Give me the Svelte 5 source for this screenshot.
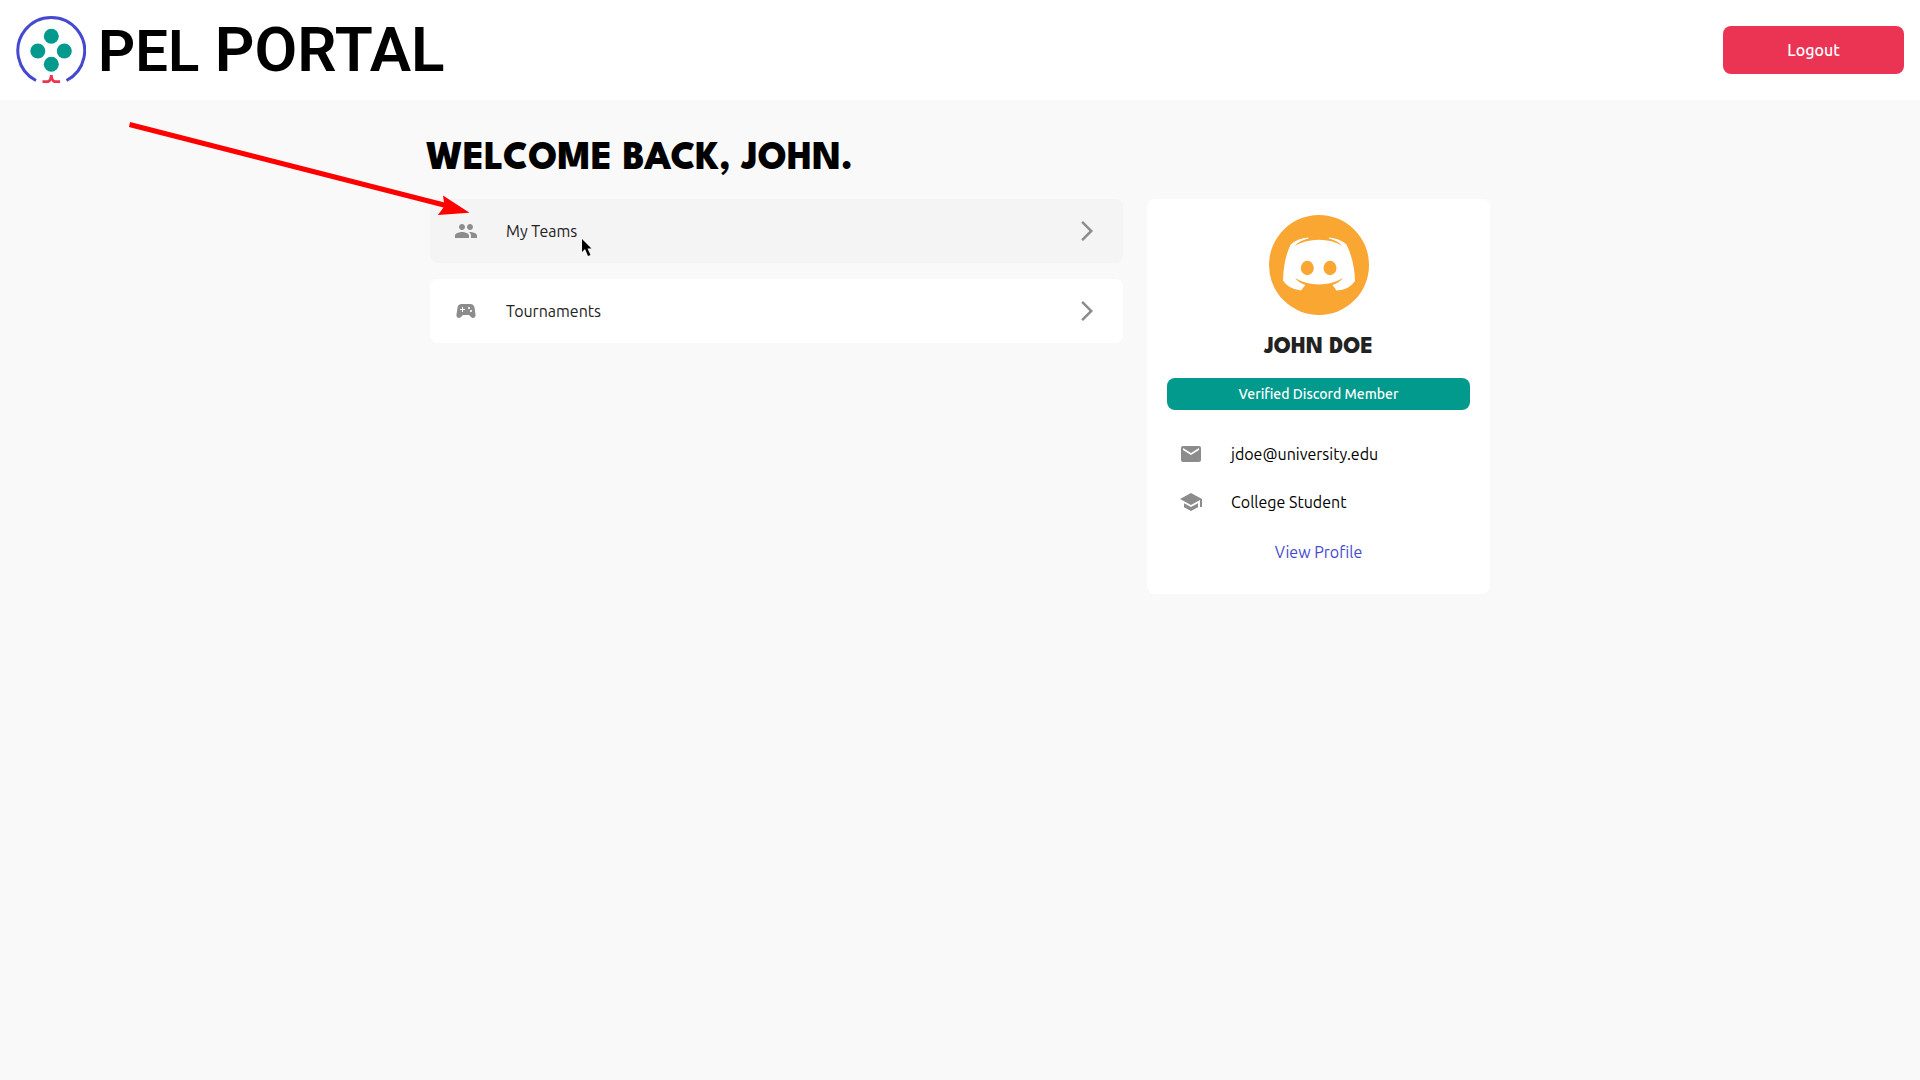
<script lang="ts">
  let user = {
    first: "John",
    name: "John Doe",
    email: "jdoe@university.edu",
    level: "College Student"
  };

  const links = [
    {
      label: "My Teams",
      href: "#teams",
      hovered: true,
      icon: "M16 11c1.66 0 2.99-1.34 2.99-3S17.66 5 16 5c-1.66 0-3 1.34-3 3s1.34 3 3 3zm-8 0c1.66 0 2.99-1.34 2.99-3S9.66 5 8 5C6.34 5 5 6.34 5 8s1.34 3 3 3zm0 2c-2.33 0-7 1.17-7 3.5V19h14v-2.5c0-2.33-4.67-3.5-7-3.5zm8 0c-.29 0-.62.02-.97.05 1.16.84 1.97 1.97 1.97 3.45V19h6v-2.5c0-2.33-4.67-3.5-7-3.5z"
    },
    {
      label: "Tournaments",
      href: "#tournaments",
      hovered: false,
      icon: "M21.58 16.09l-1.09-7.66C20.21 6.46 18.52 5 16.53 5H7.47C5.48 5 3.79 6.46 3.51 8.43l-1.09 7.66C2.2 17.63 3.39 19 4.94 19c.68 0 1.32-.27 1.8-.75L9 16h6l2.25 2.25c.48.48 1.13.75 1.8.75 1.56 0 2.75-1.37 2.53-2.91zM11 11H9v2H8v-2H6v-1h2V8h1v2h2v1zm4-1c-.55 0-1-.45-1-1s.45-1 1-1 1 .45 1 1-.45 1-1 1zm2 3c-.55 0-1-.45-1-1s.45-1 1-1 1 .45 1 1-.45 1-1 1z"
    }
  ];

  const details = [
    {
      text: user.email,
      icon: "M20 4H4c-1.1 0-1.99.9-1.99 2L2 18c0 1.1.9 2 2 2h16c1.1 0 2-.9 2-2V6c0-1.1-.9-2-2-2zm0 4l-8 5-8-5V6l8 5 8-5v2z"
    },
    {
      text: user.level,
      icon: "M5 13.18v4L12 21l7-3.82v-4L12 17l-7-3.82zM12 3L1 9l11 6 9-4.91V17h2V9L12 3z"
    }
  ];
</script>

<header class="header">
  <a class="brand" href="#home">
    <svg class="logo" viewBox="0 -1 70 70" aria-hidden="true">
      <path d="M20 64.5A33.4 33.4 0 1 1 50.5 64.5" fill="none" stroke="#4549d1" stroke-width="3" />
      <g fill="#019a8c">
        <circle cx="35.3" cy="20.3" r="7.5" />
        <circle cx="21.8" cy="35" r="7.5" />
        <circle cx="48.3" cy="35" r="7.5" />
        <circle cx="35.3" cy="48.3" r="7.5" />
      </g>
      <path d="M26.5 65.7h5.5q3-1 3.3-6.5q.3 5.5 3.3 6.5h5.5" fill="none" stroke="#eb3454" stroke-width="2.8" />
    </svg>
    <span class="brand-name"><span class="brand-short">PEL</span> PORTAL</span>
  </a>
  <button class="logout" type="button">Logout</button>
</header>

<main class="page">
  <h1 class="welcome">Welcome back, {user.first}.</h1>

  <div class="columns">
    <nav class="links" aria-label="Portal">
      {#each links as link}
        <a class="link" class:hovered={link.hovered} href={link.href}>
          <svg class="icon" viewBox="0 0 24 24" aria-hidden="true"><path d={link.icon} /></svg>
          <span class="link-label">{link.label}</span>
          <svg class="icon" viewBox="0 0 24 24" aria-hidden="true">
            <path d="M6.23 20.23 8 22l10-10L8 2 6.23 3.77 14.46 12z" />
          </svg>
        </a>
      {/each}

      <svg class="pointer-arrow" viewBox="0 0 340 92" aria-hidden="true">
        <path d="M-.5 2.5 316 83.5" stroke="#f00" stroke-width="5" />
        <path d="M313 73.5 339.5 90.7 308 93 314.5 84z" fill="#f00" />
      </svg>
      <svg class="cursor" viewBox="0 0 10 18" aria-hidden="true">
        <path d="M0 0v13l3-3 3 7 2.5-1-3-6.5H9.5z" />
      </svg>
    </nav>

    <section class="profile">
      <svg class="avatar" viewBox="0 0 100 100" role="img" aria-label="Avatar">
        <circle cx="50" cy="50" r="50" fill="#faa633" />
        <path
          fill="#fff"
          d="M21.7 29.5Q29 23 39.5 22.5L39.3 23.6Q31 25.5 25.5 31Q37 24.8 50 24.8T73.5 31Q68 25.5 60 23.6L59.8 22.5Q70 23 77.5 29.5Q85.5 46 86 66Q80 75 67.5 75.5L63.5 70Q70 68 74 63Q63 69.5 50 69.5T26 63Q30 68 36.3 70L32 75.5Q19 74 14 65.5Q14.5 44 21.7 29.5z"
        />
        <ellipse cx="38.3" cy="53" rx="6.5" ry="7.2" fill="#faa633" />
        <ellipse cx="61" cy="53" rx="6.5" ry="7.2" fill="#faa633" />
      </svg>
      <h2 class="name">{user.name}</h2>
      <div class="badge">Verified Discord Member</div>
      <ul class="details">
        {#each details as detail}
          <li class="detail">
            <svg class="icon" viewBox="0 0 24 24" aria-hidden="true"><path d={detail.icon} /></svg>
            <span>{detail.text}</span>
          </li>
        {/each}
      </ul>
      <a class="view-profile" href="#profile">View Profile</a>
    </section>
  </div>
</main>

<style>
  :global(body) {
    margin: 0;
    background: #f9f9f9;
    font-family: "Ubuntu", "Noto Sans", sans-serif;
    font-size: 16px;
    line-height: 24px;
    color: #000;
  }

  .header {
    display: flex;
    align-items: center;
    justify-content: space-between;
    box-sizing: border-box;
    height: 100px;
    padding: 0 16px;
    background: #fff;
  }

  .brand {
    display: flex;
    align-items: center;
    gap: 12px;
    color: #000;
    text-decoration: none;
  }

  .logo {
    width: 70px;
    height: 70px;
  }

  .brand-name {
    font-family: Roboto, sans-serif;
    font-size: 62px;
    font-weight: 600;
    line-height: 72px;
    white-space: nowrap;
  }

  .brand-short {
    font-size: 58px;
  }

  .logout {
    width: 181px;
    height: 48px;
    border: 0;
    border-radius: 8px;
    background: #eb3454;
    color: #fff;
    font: inherit;
    font-weight: 500;
    cursor: pointer;
  }

  .page {
    box-sizing: border-box;
    max-width: 1068px;
    margin: 0 auto;
    padding-top: 36px;
  }

  .welcome {
    margin: 0;
    font-family: "League Spartan", Lato, sans-serif;
    font-size: 39px;
    font-weight: 800;
    line-height: 48px;
    text-transform: uppercase;
  }

  .columns {
    display: grid;
    grid-template-columns: minmax(0, 1fr) 343px;
    align-items: start;
    gap: 24px;
    padding: 15px 4px 0;
  }

  .links {
    position: relative;
    display: flex;
    flex-direction: column;
    gap: 16px;
  }

  .link {
    display: flex;
    align-items: center;
    height: 64px;
    padding: 0 24px;
    border-radius: 8px;
    background: #fff;
    color: #222;
    text-decoration: none;
  }

  .link.hovered {
    background: #f4f4f4;
  }

  .link-label {
    flex: 1;
    padding-left: 28px;
  }

  .icon {
    flex: none;
    width: 24px;
    height: 24px;
    fill: #8c8c8c;
  }

  .pointer-arrow {
    position: absolute;
    top: -77px;
    left: -300px;
    width: 340px;
    height: 92px;
    overflow: visible;
    pointer-events: none;
  }

  .cursor {
    position: absolute;
    top: 40px;
    left: 152px;
    width: 10px;
    height: 18px;
    overflow: visible;
    stroke: #fff;
    stroke-width: 1;
    paint-order: stroke;
    pointer-events: none;
  }

  .profile {
    display: flex;
    flex-direction: column;
    align-items: center;
    padding: 16px 20px 30px;
    border-radius: 8px;
    background: #fff;
  }

  .avatar {
    width: 100px;
    height: 100px;
  }

  .name {
    margin: 18px 0 16px;
    font-family: "League Spartan", Lato, sans-serif;
    font-size: 23px;
    font-weight: 800;
    line-height: 29px;
    color: #222;
    text-transform: uppercase;
  }

  .badge {
    align-self: stretch;
    border-radius: 8px;
    background: #019a8c;
    color: #fff;
    font-size: 14px;
    font-weight: 500;
    line-height: 32px;
    text-align: center;
  }

  .details {
    align-self: stretch;
    margin: 20px 0 0;
    padding: 0;
    list-style: none;
  }

  .detail {
    display: flex;
    align-items: center;
    gap: 28px;
    height: 48px;
    padding: 0 12px;
  }

  .view-profile {
    margin-top: 14px;
    color: #4549d1;
    text-decoration: none;
  }
</style>
